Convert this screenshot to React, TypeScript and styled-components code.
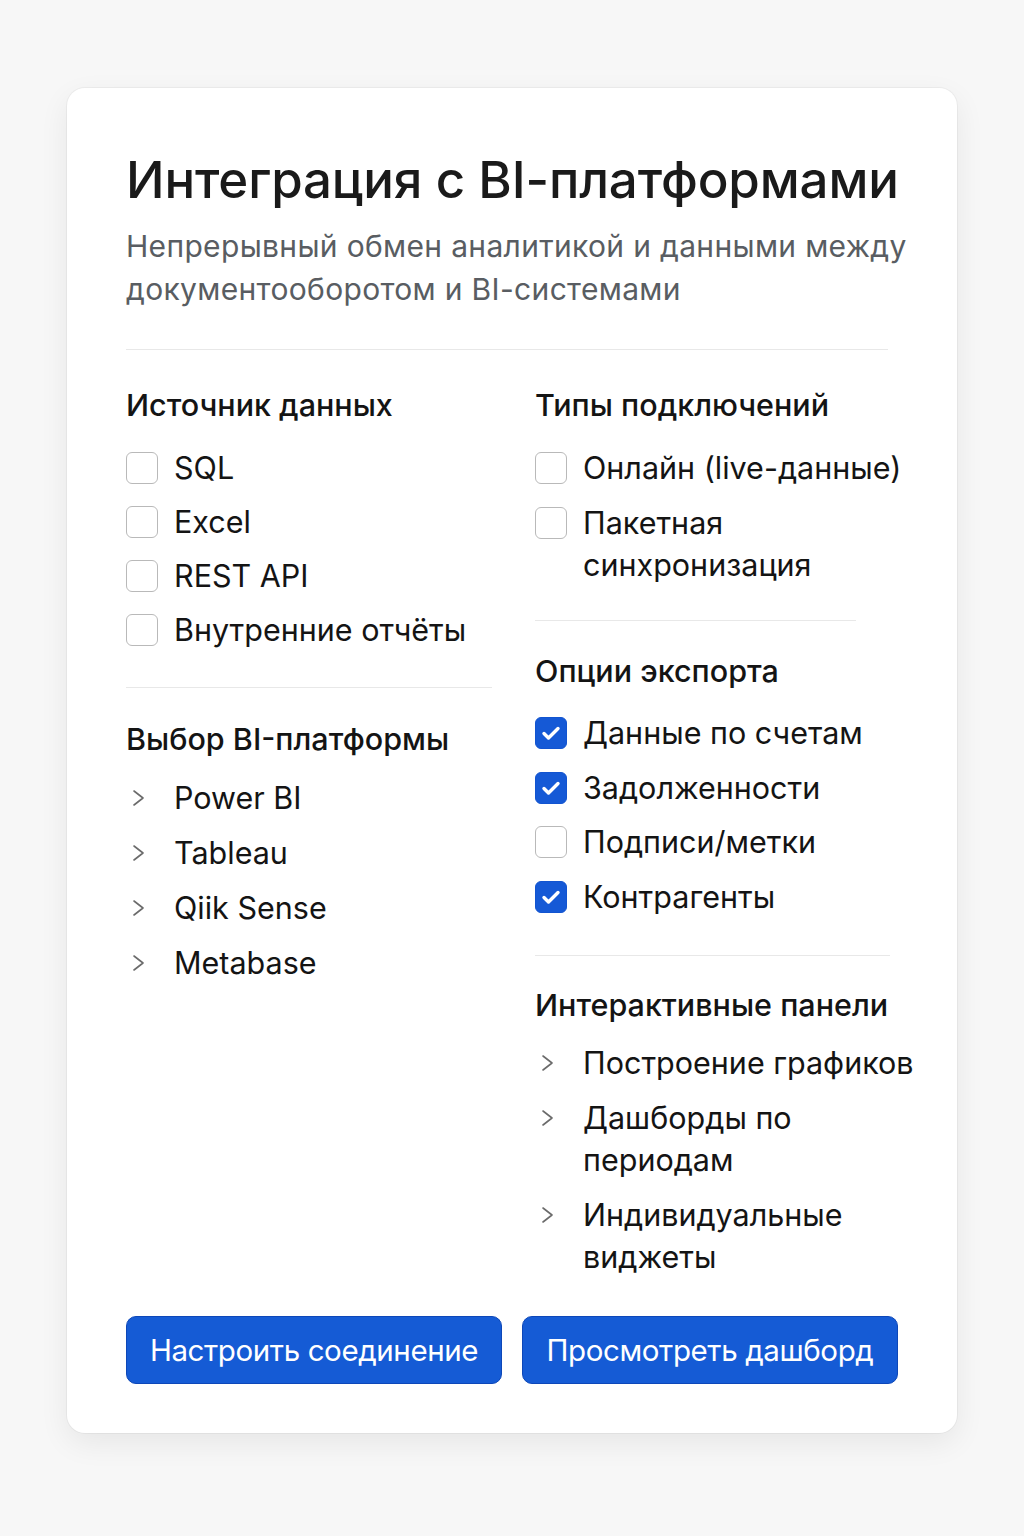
import React from "react";
import styled, { createGlobalStyle } from "styled-components";

const Global = createGlobalStyle`
  html, body { margin: 0; padding: 0; background: #f7f7f7; }
  body { font-family: Inter, "Noto Sans", "Liberation Sans", sans-serif; color: #141414; }
  * { box-sizing: border-box; }
`;

const Page = styled.div`
  width: 1024px;
  min-height: 1536px;
  padding: 88px 67px 0 67px;
`;

const Card = styled.div`
  width: 890px;
  height: 1345px;
  background: #fff;
  border-radius: 18px;
  box-shadow: 0 10px 30px rgba(0, 0, 0, 0.07), 0 0 0 1px rgba(0, 0, 0, 0.04);
  padding: 62px 40px 49px 59px;
  display: flex;
  flex-direction: column;
`;

const Title = styled.h1`
  margin: 0;
  font-size: 51px;
  line-height: 60px;
  font-weight: 500;
  color: #1a1a1a;
  letter-spacing: -0.15px;
`;

const Subtitle = styled.p`
  margin: 15px 0 0 0;
  font-size: 30px;
  line-height: 43px;
  font-weight: 400;
  color: #595d62;
  letter-spacing: 0.33px;
  max-width: 810px;
`;

const Divider = styled.hr<{ $w?: number; $mt?: number; $mb?: number }>`
  border: 0;
  height: 1px;
  background: #e8e8e8;
  width: ${(p) => (p.$w ? `${p.$w}px` : "100%")};
  margin: ${(p) => p.$mt ?? 35}px 0 ${(p) => p.$mb ?? 35}px 0;
`;

const Columns = styled.div`
  display: grid;
  grid-template-columns: 366px 1fr;
  column-gap: 43px;
`;

const Column = styled.div`
  display: flex;
  flex-direction: column;
`;

const Section = styled.section``;

const Heading = styled.h2<{ $mb?: number }>`
  margin: 0 0 ${(p) => p.$mb ?? 22}px 0;
  font-size: 30.5px;
  line-height: 36px;
  font-weight: 500;
  color: #141414;
`;

const List = styled.ul<{ $gap?: number }>`
  list-style: none;
  margin: 0;
  padding: 0;
  display: flex;
  flex-direction: column;
  gap: ${(p) => p.$gap ?? 12}px;
`;

const Item = styled.li`
  display: flex;
  align-items: flex-start;
  gap: 17px;
  font-size: 30.5px;
  line-height: 42px;
  color: #141414;
`;

const ItemText = styled.span`
  margin-left: -1px;
`;

const Box = styled.span<{ $checked?: boolean }>`
  flex: none;
  width: 32px;
  height: 32px;
  margin-top: 5px;
  border-radius: 6px;
  border: 1.5px solid ${(p) => (p.$checked ? "#1254d0" : "#b9b9b9")};
  background: ${(p) => (p.$checked ? "#1559d6" : "#fff")};
  display: flex;
  align-items: center;
  justify-content: center;
`;

const ChevronWrap = styled.span`
  flex: none;
  width: 32px;
  height: 42px;
  display: flex;
  align-items: center;
  justify-content: flex-start;
  padding-left: 6px;
`;

const Actions = styled.div`
  margin-top: auto;
  width: 772px;
  display: flex;
  gap: 20px;
`;

const Button = styled.button`
  flex: 1;
  height: 68px;
  border-radius: 10px;
  border: 1.5px solid #0d47b8;
  background: #155bd5;
  color: #fff;
  font-family: Inter, "Noto Sans", "Liberation Sans", sans-serif;
  font-size: 29.5px;
  font-weight: 400;
  letter-spacing: -0.4px;
  cursor: pointer;
`;

const Check = () => (
  <svg width="24" height="24" viewBox="0 0 24 24">
    <path d="M5 12.5l4.5 4.5L19 7.5" fill="none" stroke="#fff" strokeWidth="3.4" strokeLinecap="round" strokeLinejoin="round" />
  </svg>
);

const Chevron = () => (
  <svg width="14" height="20" viewBox="0 0 14 20">
    <path d="M2 3l9 7-9 7" fill="none" stroke="#6b6b6b" strokeWidth="1.6" strokeLinecap="round" strokeLinejoin="round" />
  </svg>
);

const CheckItem = ({ label, checked }: { label: string; checked?: boolean }) => (
  <Item>
    <Box $checked={checked}>{checked && <Check />}</Box>
    <ItemText>{label}</ItemText>
  </Item>
);

const LinkItem = ({ label }: { label: React.ReactNode }) => (
  <Item>
    <ChevronWrap>
      <Chevron />
    </ChevronWrap>
    <ItemText>{label}</ItemText>
  </Item>
);

export default function App() {
  return (
    <>
      <Global />
      <Page>
        <Card>
          <Title>Интеграция с BI-платформами</Title>
          <Subtitle>Непрерывный обмен аналитикой и данными между документооборотом и BI-системами</Subtitle>
          <Divider $w={762} $mt={38} $mb={37} />
          <Columns>
            <Column>
              <Section>
                <Heading $mb={24}>Источник данных</Heading>
                <List>
                  <CheckItem label="SQL" />
                  <CheckItem label="Excel" />
                  <CheckItem label="REST API" />
                  <CheckItem label="Внутренние отчёты" />
                </List>
              </Section>
              <Divider $w={366} $mt={36} $mb={33} />
              <Section>
                <Heading $mb={20}>Выбор BI-платформы</Heading>
                <List $gap={13}>
                  <LinkItem label="Power BI" />
                  <LinkItem label="Tableau" />
                  <LinkItem label="Qiik Sense" />
                  <LinkItem label="Metabase" />
                </List>
              </Section>
            </Column>
            <Column>
              <Section>
                <Heading $mb={24}>Типы подключений</Heading>
                <List $gap={13}>
                  <CheckItem label="Онлайн (live-данные)" />
                  <CheckItem label="Пакетная синхронизация" />
                </List>
              </Section>
              <Divider $w={321} $mt={34} $mb={32} />
              <Section>
                <Heading $mb={23}>Опции экспорта</Heading>
                <List $gap={12.5}>
                  <CheckItem label="Данные по счетам" checked />
                  <CheckItem label="Задолженности" checked />
                  <CheckItem label="Подписи/метки" />
                  <CheckItem label="Контрагенты" checked />
                </List>
              </Section>
              <Divider $w={355} $mt={37} $mb={31} />
              <Section>
                <Heading $mb={19}>Интерактивные панели</Heading>
                <List $gap={13}>
                  <LinkItem label="Построение графиков" />
                  <LinkItem label={<>Дашборды по<br />периодам</>} />
                  <LinkItem label={<>Индивидуальные<br />виджеты</>} />
                </List>
              </Section>
            </Column>
          </Columns>
          <Actions>
            <Button>Настроить соединение</Button>
            <Button>Просмотреть дашборд</Button>
          </Actions>
        </Card>
      </Page>
    </>
  );
}
